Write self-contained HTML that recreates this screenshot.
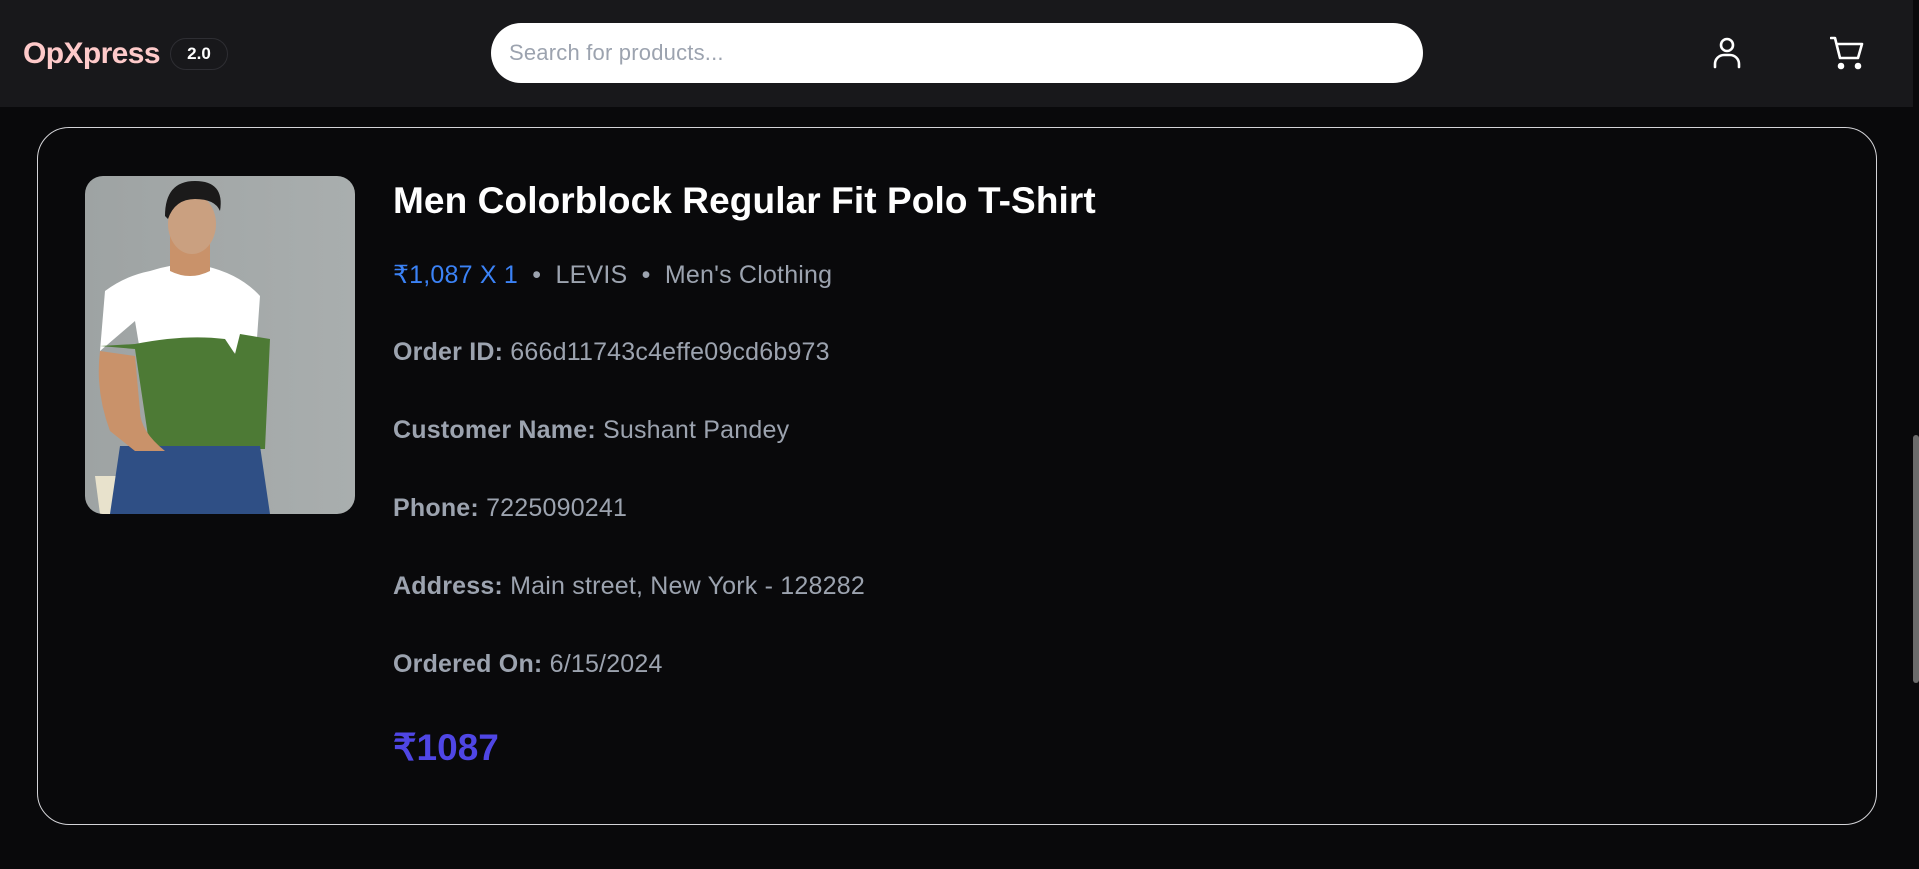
<!DOCTYPE html>
<html><head><meta charset="utf-8"><style>
*{margin:0;padding:0;box-sizing:border-box}
body{width:1919px;height:869px;background:#09090b;font-family:"Liberation Sans",sans-serif;overflow:hidden;position:relative}
.hdr{position:absolute;left:0;top:0;width:1913px;height:107px;background:#18181b}
.logo{position:absolute;left:23px;top:37px;font-size:30px;line-height:34px;font-weight:bold;color:#fecaca;letter-spacing:-0.6px}
.badge{position:absolute;left:170px;top:38px;width:58px;height:32px;border:1px solid #2e2e33;border-radius:16px;color:#fff;font-size:17px;font-weight:bold;text-align:center;line-height:30px}
.search{position:absolute;left:491px;top:23px;width:932px;height:60px;background:#fff;border-radius:30px;color:#9ca3af;font-size:22px;line-height:60px;padding-left:18px;letter-spacing:0.2px}
.card{position:absolute;left:37px;top:127px;width:1840px;height:698px;border:1px solid #d4d4d8;border-radius:32px}
.img{position:absolute;left:85px;top:176px;width:270px;height:338px;border-radius:18px;overflow:hidden}
.t{position:absolute;left:393px;font-size:25px;color:#9ca3af;white-space:nowrap;letter-spacing:0.2px}
.t b{color:#9ca3af}
.title{position:absolute;left:393px;top:180px;font-size:37px;font-weight:bold;color:#fff;letter-spacing:0.1px}
.scroll{position:absolute;left:1913px;top:435px;width:6px;height:248px;background:#6b6b6b;border-radius:3px}
</style></head><body>
<div class="hdr">
<div class="logo">OpXpress</div>
<div class="badge">2.0</div>
<div class="search">Search for products...</div>
<svg style="position:absolute;left:1712px;top:36px" width="30" height="34" viewBox="0 0 30 34" fill="none" stroke="#fff" stroke-width="2.6" stroke-linecap="round"><circle cx="15" cy="9" r="6"/><path d="M3 31v-3a9 9 0 0 1 9-9h6a9 9 0 0 1 9 9v3"/></svg>
<svg style="position:absolute;left:1830px;top:36px" width="36" height="36" viewBox="0 0 36 36" fill="none" stroke="#fff" stroke-width="2.6" stroke-linecap="round" stroke-linejoin="round"><path d="M1 2h4l5 20h18l4-14H8"/><circle cx="11" cy="30" r="2" fill="#fff"/><circle cx="28" cy="30" r="2" fill="#fff"/></svg>
</div>
<div class="card"></div>
<div class="img"><svg width="270" height="338" viewBox="0 0 270 338">
<defs><linearGradient id="bg" x1="0" x2="1"><stop offset="0" stop-color="#9ea3a3"/><stop offset="1" stop-color="#a9aeae"/></linearGradient></defs>
<rect width="270" height="338" fill="url(#bg)"/>
<path d="M10 300h40v38H15z" fill="#e8e2cc"/>
<path d="M65 95q30-10 55-5q35 8 55 30l-5 70l-20 5v-20l-5 30H60l-10-60l-35 30L20 115q20-15 45-20z" fill="#fff"/>
<path d="M15 170l35 3l15 100h115l5-110l-30-5l-5 20l-10-15q-40-5-90 5z" fill="#4d7a35"/>
<path d="M35 270h140l10 68H25z" fill="#2f4f85"/>
<path d="M15 175q-5 40 10 80l25 20h30q-25-20-25-40l-5-55z" fill="#c9926a"/>
<path d="M85 60h40v35q-20 10-40 0z" fill="#c9926a"/>
<ellipse cx="107" cy="48" rx="24" ry="30" fill="#caa080"/>
<path d="M80 40q0-35 30-35q30 0 25 30q-5-12-25-12q-20 0-27 20z" fill="#1b1a1a"/>
</svg></div>
<div class="title">Men Colorblock Regular Fit Polo T-Shirt</div>
<div class="t" style="top:260px"><span style="color:#3b82f6">₹1,087 X 1</span> &nbsp;•&nbsp; LEVIS &nbsp;•&nbsp; Men's Clothing</div>
<div class="t" style="top:338px"><b>Order ID:</b> 666d11743c4effe09cd6b973</div>
<div class="t" style="top:416px"><b>Customer Name:</b> Sushant Pandey</div>
<div class="t" style="top:494px"><b>Phone:</b> 7225090241</div>
<div class="t" style="top:572px"><b>Address:</b> Main street, New York - 128282</div>
<div class="t" style="top:650px"><b>Ordered On:</b> 6/15/2024</div>
<div class="t" style="top:726px;font-size:37px;font-weight:bold;color:#4f46e5;letter-spacing:0">₹1087</div>
<div class="scroll"></div>
</body></html>
